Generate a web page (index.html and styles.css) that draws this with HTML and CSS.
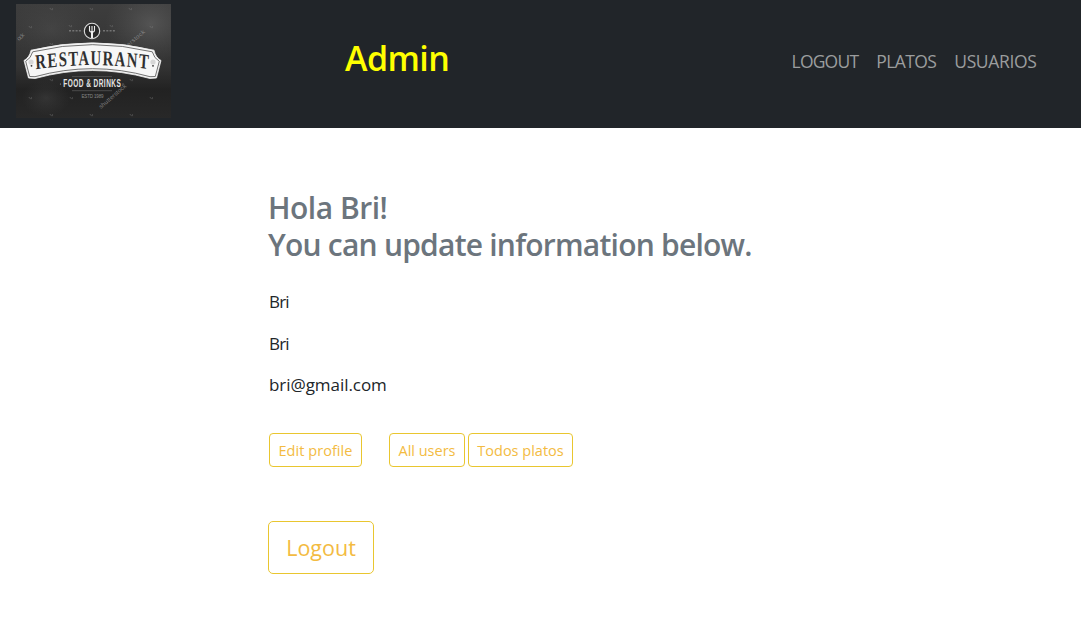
FILE: index.html
```html
<!DOCTYPE html>
<html lang="es">
<head>
<meta charset="utf-8">
<title>Admin</title>
<link rel="stylesheet" href="styles.css">
</head>
<body>
<header class="navbar">
  <a class="brand" href="#" aria-label="Restaurant">
    <svg class="logo" viewBox="0 0 155 114" width="155" height="114">
      <defs>
        <radialGradient id="glow"><stop offset="0" stop-color="#626262" stop-opacity=".65"/><stop offset="1" stop-color="#555" stop-opacity="0"/></radialGradient>
        <linearGradient id="board" x1="0" y1="0" x2="0" y2="1"><stop offset="0" stop-color="#3d3d3d"/><stop offset=".55" stop-color="#333"/><stop offset=".75" stop-color="#222"/><stop offset="1" stop-color="#282828"/></linearGradient>
        <path id="arch" d="M0 68.8Q109.6 53.5 219 68.8"/>
        <path id="speck" d="M-1.2-1L.8 1.2M1.4-.8l.2 1.6"/>
      </defs>
      <rect width="155" height="114" fill="url(#board)"/>
      <ellipse cx="135" cy="20" rx="46" ry="38" fill="url(#glow)"/>
      <ellipse cx="35" cy="25" rx="45" ry="30" fill="url(#glow)" opacity=".4"/>
      <ellipse cx="30" cy="94" rx="24" ry="18" fill="url(#glow)" opacity=".4"/>
      <g stroke="#858585" stroke-width=".7" opacity=".6">
        <use href="#speck" x="35" y="5"/><use href="#speck" x="75" y="5"/><use href="#speck" x="114" y="5"/>
        <use href="#speck" x="14" y="23"/><use href="#speck" x="54" y="22"/><use href="#speck" x="95" y="22"/><use href="#speck" x="135" y="23"/>
        <use href="#speck" x="35" y="40"/><use href="#speck" x="35" y="76"/><use href="#speck" x="115" y="76"/>
        <use href="#speck" x="14" y="94"/><use href="#speck" x="55" y="94"/><use href="#speck" x="135" y="94"/>
        <use href="#speck" x="35" y="111"/><use href="#speck" x="75" y="111"/><use href="#speck" x="115" y="111"/>
      </g>
      <g class="watermark">
        <text transform="translate(3 37) rotate(-43)" textLength="8">ock</text>
        <text transform="translate(111 44) rotate(-40)" textLength="24">terstock</text>
        <text transform="translate(85 105) rotate(-41)" textLength="34">shutterstock</text>
      </g>
      <circle cx="76" cy="27" r="7.7" fill="#292929" stroke="#ddd" stroke-width="1.1"/>
      <path d="M73.500 22v4.200q0 1.900 2.500 1.900t2.500-1.900V22M76 22v5.500" fill="none" stroke="#eee" stroke-width="1.100"/>
      <path d="M76 27v7" stroke="#eee" stroke-width="2"/>
      <path d="M53 26.8h12.5M87 26.8h12.5" stroke="#999" stroke-width="1.6" stroke-dasharray="2 1.3" opacity=".6"/>
      <path d="M8 56.5q5.500-3 7-10.300Q76.500 31.500 138 46.200q1.500 7.300 7 10.300l-4.500 17.500-6.500.5Q76.500 58.500 19 74.500l-6.500-.5z" fill="#f7f7f7" stroke="#eee" stroke-width=".8"/>
      <path d="M9.700 57.300q5.300-3 7-9.500Q76.500 33.500 136.300 47.800q1.700 6.500 7 9.500l-4 15.200-5.300.2Q76.500 56.700 19 72.700l-5.300-.2z" fill="none" stroke="#444" stroke-width=".75"/>
      <circle cx="15" cy="58" r="2.6" fill="#d7d7d7"/><circle cx="137" cy="58" r="2.600" fill="#d7d7d7"/>
      <circle cx="15.500" cy="61.800" r=".9" fill="#333"/><circle cx="137" cy="61.800" r=".9" fill="#333"/>
      <g transform="scale(.7 1)"><text class="banner-text"><textPath href="#arch" startOffset="28.500" textLength="161">RESTAURANT</textPath></text></g>
      <path d="M56 72.600h40M56 86.700h40" stroke="#666" stroke-width=".6"/>
      <g transform="translate(47.300 83.300) scale(.62 1)"><text class="tagline" textLength="92.700">FOOD &amp; DRINKS</text></g>
      <circle cx="44.500" cy="80" r=".6" fill="#aaa"/><circle cx="107" cy="80" r=".6" fill="#aaa"/>
      <text class="estd" x="65.500" y="93.800" textLength="22">ESTD 1989</text>
    </svg>
  </a>
  <h1 class="title">Admin</h1>
  <nav class="links">
    <a class="link logout" href="#">LOGOUT</a>
    <a class="link platos" href="#">PLATOS</a>
    <a class="link usuarios" href="#">USUARIOS</a>
  </nav>
</header>
<main class="profile">
  <h2 class="greeting"><span class="hello">Hola Bri!</span><br>You can update information below.</h2>
  <div class="details">
    <p class="detail">Bri</p>
    <p class="detail">Bri</p>
    <p class="detail email">bri@gmail.com</p>
  </div>
  <div class="actions">
    <a class="btn edit" href="#">Edit profile</a>
    <a class="btn users" href="#">All users</a>
    <a class="btn dishes" href="#">Todos platos</a>
  </div>
  <a class="btn btn-large" href="#">Logout</a>
</main>
</body>
</html>
```
FILE: styles.css
```css
* { box-sizing: border-box; }
body { margin: 0; background: #fff; color: #212529; font-family: "Open Sans", "Noto Sans", sans-serif; }
a { text-decoration: none; }
.navbar { display: flex; align-items: flex-start; height: 128px; padding: 4px 44.500px 0 16px; background: #212529; }
.brand { display: block; width: 155px; height: 114px; }
.logo { display: block; }
.watermark { fill: #999; opacity: .75; font: 6px "Liberation Sans", sans-serif; }
.banner-text { fill: #303030; font: bold 21px "Liberation Serif", serif; }
.tagline { fill: #e5e5e5; font: bold 10.500px "Liberation Sans", sans-serif; }
.estd { fill: #888; font: 4.5px "Liberation Sans", sans-serif; }
.title { margin: 30px 0 0 174px; color: #ff0; font-size: 34px; line-height: 48px; font-weight: 600; letter-spacing: -.6px; white-space: nowrap; }
.links { display: flex; gap: 18px; margin: 44px 0 0 auto; }
.link { color: #9b9d9e; font-size: 17.500px; line-height: 26px; white-space: nowrap; }
.logout { letter-spacing: -.8px; }
.platos { letter-spacing: -.6px; }
.usuarios { letter-spacing: -.35px; }
.profile { padding: 61px 0 0 268px; }
.greeting { margin: 0; color: #6c757d; font-size: 30px; line-height: 37px; font-weight: 600; letter-spacing: -.77px; white-space: nowrap; }
.hello { letter-spacing: -.5px; }
.details { display: grid; gap: 15.500px; padding: 26px 0 0 1px; }
.detail { margin: 0; font-size: 17px; line-height: 26px; letter-spacing: -.8px; }
.email { letter-spacing: -.05px; }
.actions { display: flex; padding: 35px 0 0 1px; }
.btn { display: flex; align-items: center; justify-content: center; height: 34px; border: 1px solid #e9c62f; border-radius: 4px; color: #f3bb42; font-size: 14.500px; letter-spacing: 0; white-space: nowrap; }
.edit { width: 93px; letter-spacing: .05px; }
.users { width: 76px; margin-left: 27px; }
.dishes { width: 105px; margin-left: 3px; }
.btn-large { width: 106px; height: 53px; margin-top: 54px; border-radius: 5px; font-size: 21.500px; }
```
